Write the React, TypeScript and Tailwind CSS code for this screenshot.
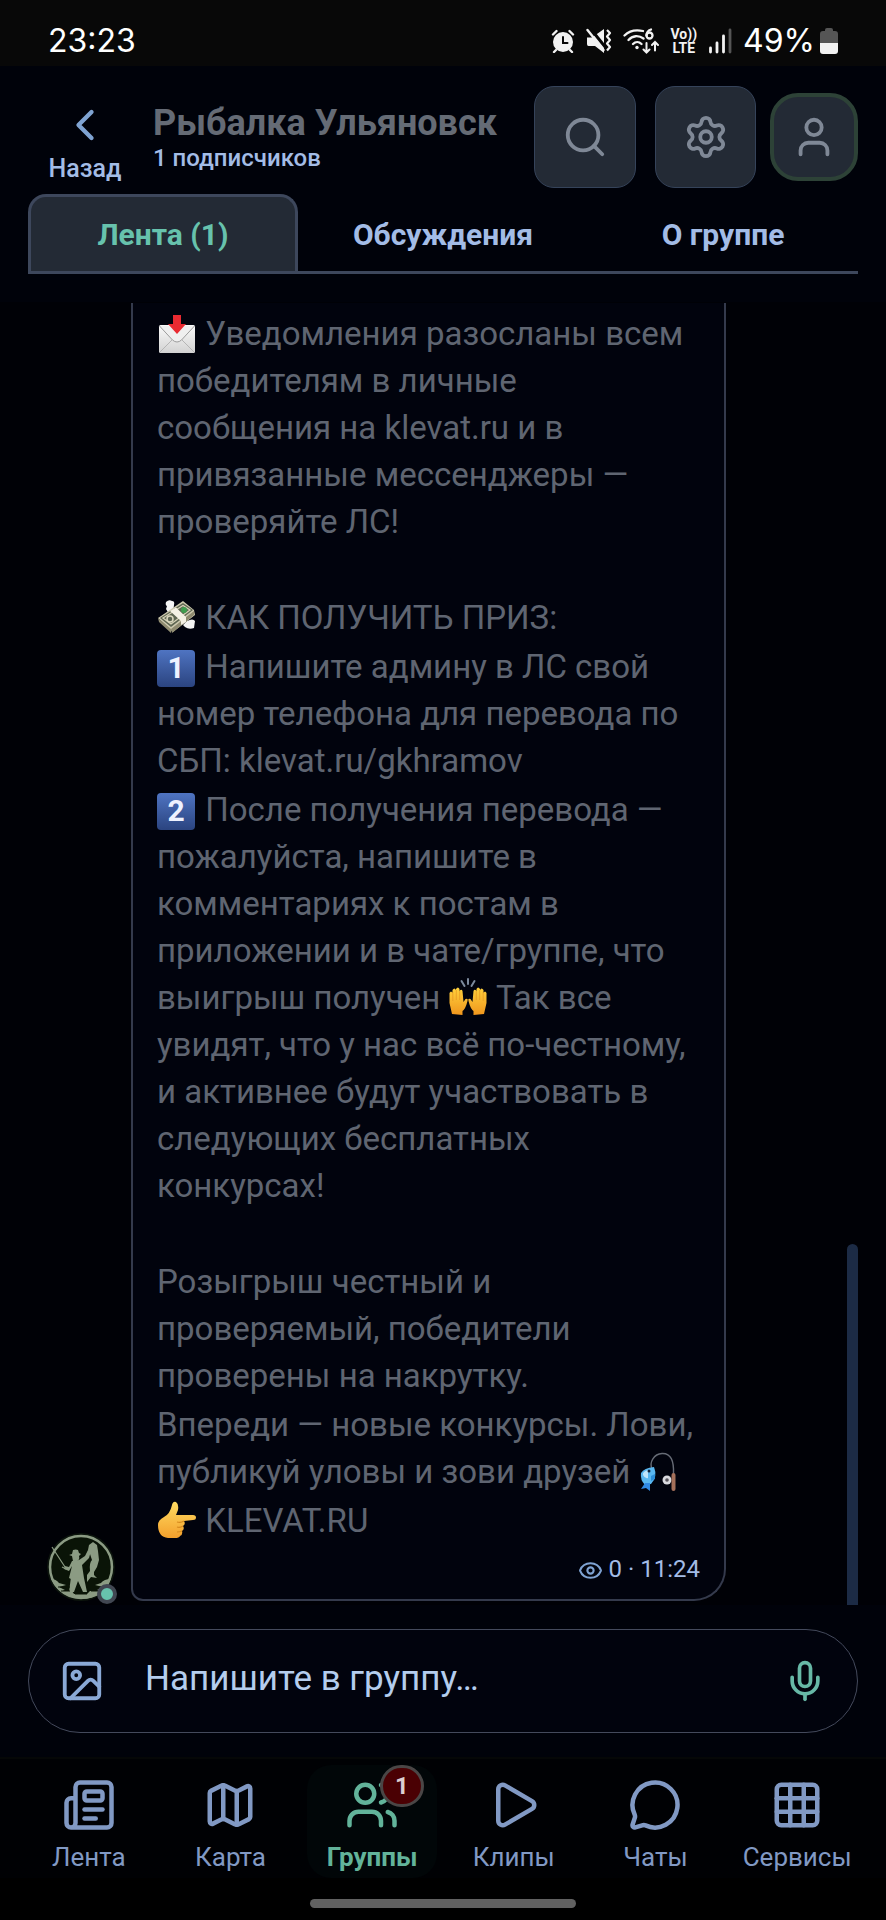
import type { ReactNode } from "react";
import {
  ChevronLeft,
  Eye,
  Grid3x3,
  Image,
  Map,
  MessageCircle,
  Mic,
  Newspaper,
  Play,
  Search,
  Settings,
  User,
  Users,
} from "lucide-react";

const StatusBar = () => (
  <div className="flex h-[66px] shrink-0 items-center justify-between bg-[#080808] pt-4 pr-12 pl-12 font-[Inter,sans-serif] text-white">
    <span className="text-[32px] leading-[36px]">23:23</span>
    <div className="flex items-center gap-[11px]">
      {/* alarm */}
      <svg viewBox="0 0 24 24" className="h-6 w-6" fill="none" stroke="#f2f2f2" strokeWidth="2.4" strokeLinecap="round">
        <circle cx="12" cy="13" r="10" fill="#f2f2f2" stroke="none" />
        <path d="M2 5.5 5.5 2M22 5.5 18.500 2M5 21l-2 2M19 21l2 2" />
        <path d="M12 8v6h4.500" stroke="#080808" strokeWidth="2" />
      </svg>
      {/* vibrate, sound off */}
      <svg viewBox="0 0 26 26" className="h-[26px] w-[26px]" fill="none">
        <path d="M1 9.500h5L18 1v24L9 18H2.500Q1 18 1 16Z" fill="#f2f2f2" />
        <path d="m4 0 16 20" stroke="#080808" strokeWidth="3" />
        <path d="m1.500 2 16 20" stroke="#f2f2f2" strokeWidth="2.400" strokeLinecap="round" />
        <path d="m21 2 3 3-3 3.500 3 3.500-3 3.500 3 3.500-3 3.500" stroke="#f2f2f2" strokeWidth="2.200" strokeLinejoin="round" />
      </svg>
      {/* wi-fi 6 */}
      <svg viewBox="0 0 36 26" className="h-[26px] w-9" fill="none" stroke="#f2f2f2" strokeWidth="2.300" strokeLinecap="round">
        <path d="M1.500 7.500C7 2 13 1.500 20 3M5.500 12c4-4.500 10-5 15-1.500M10 16c2.500-2.500 6-2.500 8.500 0" />
        <circle cx="14" cy="19.500" r="1.700" fill="#f2f2f2" stroke="none" />
        <path d="M28 1.500c-3 1-4.500 3.500-4.500 6" />
        <circle cx="26.500" cy="7.500" r="3" />
        <path d="M23.500 15v9.500m-3-3 3 3 3-3M32 22.500V14m-3 3 3-3 3 3" strokeWidth="2" />
      </svg>
      <span className="text-center font-[Roboto,sans-serif] text-[14px] leading-[14px] font-bold text-[#f2f2f2]">
        Vo))
        <br />
        LTE
      </span>
      <svg viewBox="0 0 24 26" className="h-[26px] w-6">
        <path d="M2.500 24v-4M9 24v-9M15.500 24V8" stroke="#f2f2f2" strokeWidth="2.800" strokeLinecap="round" />
        <path d="M22 24V2" stroke="#555" strokeWidth="2.800" strokeLinecap="round" />
      </svg>
      <div className="flex items-center gap-[5px]">
        <span className="text-[32px] leading-[36px]">49%</span>
        <svg viewBox="0 0 18 26" className="h-[26px] w-[18px]">
          <path d="M5 3V2q0-2 2-2h4q2 0 2 2v1h2q3 0 3 3v9H0V6q0-3 3-3Z" fill="#555" />
          <path d="M0 15h18v8q0 3-3 3H3q-3 0-3-3Z" fill="#f2f2f2" />
        </svg>
      </div>
    </div>
  </div>
);

const Header = () => (
  <header className="flex shrink-0 items-start px-7 pt-5">
    <a href="#back" className="flex w-[114px] flex-col items-center pt-[13px] text-[25px] leading-[28px] font-medium text-[#a3bce6]">
      <ChevronLeft className="mb-1 h-[52px] w-[52px] text-[#7fa3d2]" />
      Назад
    </a>
    <div className="min-w-0 flex-1 pt-4 pl-[11px]">
      <h1 className="truncate text-[36px] leading-[42px] font-bold text-[#656b75]">Рыбалка Ульяновск</h1>
      <p className="text-[24px] leading-[28px] font-medium text-[#a3bce6]">1 подписчиков</p>
    </div>
    <div className="flex items-center text-[#7f8896]">
      <button aria-label="Поиск" className="mr-[19px] flex h-[102px] w-[102px] items-center justify-center rounded-[20px] border border-[#35435a] bg-[#232a35]">
        <Search className="h-[46px] w-[46px]" />
      </button>
      <button aria-label="Настройки" className="mr-[14px] flex h-[102px] w-[101px] items-center justify-center rounded-[20px] border border-[#35435a] bg-[#232a35]">
        <Settings className="h-[46px] w-[46px]" />
      </button>
      <button aria-label="Профиль" className="flex h-[88px] w-[88px] items-center justify-center rounded-[28px] border-4 border-[#2d4237] bg-[#232a35]">
        <User className="h-[46px] w-[46px]" />
      </button>
    </div>
  </header>
);

const Tabs = () => (
  <nav className="mx-7 mt-[6px] grid h-20 shrink-0 grid-cols-3 gap-[10px] border-b-[3px] border-[#3d475c] text-[30px] font-bold text-[#a3bce6]">
    <button className="rounded-t-[18px] border-[3px] border-b-0 border-[#3d475c] bg-[#232a35] text-[#67c2ad]">Лента (1)</button>
    <button className="pt-[3px]">Обсуждения</button>
    <button className="pt-[3px]">О группе</button>
  </nav>
);

const Emoji = ({ label, children }: { label: string; children: ReactNode }) => (
  <svg viewBox="0 0 40 40" role="img" aria-label={label} className="inline-block h-10 w-10 align-[-9px]">
    {children}
  </svg>
);

const Envelope = () => (
  <Emoji label="Входящее письмо">
    <defs>
      <linearGradient id="paper" x1="0" y1="0" x2="0" y2="1">
        <stop offset="0" stopColor="#fafafa" />
        <stop offset="1" stopColor="#d2d2d2" />
      </linearGradient>
    </defs>
    <rect x="2" y="11" width="36" height="28" rx="1.500" fill="url(#paper)" />
    <path d="m3 38 12-12M37 38 25 26" stroke="#b5b5b5" strokeWidth="1" />
    <path d="m2.500 12 13 14q4.500 4 9 0l13-14" fill="#efefef" stroke="#9c9c9c" strokeWidth="1" />
    <path d="M16 1h8v9h5l-9 10-9-10h5Z" fill="#e92a31" />
  </Emoji>
);

const Money = () => (
  <Emoji label="Деньги">
    <path d="M10 8q-2-1-1-4 3-3 6-1 3 0 2 4l-1 8-4 1-3-5ZM26 27l4-4q6-3 8 0l-1 7q-5 2-9-1Z" fill="#f5f5f5" />
    <path d="M1 20 26 3l11 9 1 5-22 17Z" fill="#cdc9ae" />
    <path d="m1 20 13 11v4L2 24ZM14 31l23-18v4L15 35Z" fill="#8f8b70" />
    <path d="m3 20 23-15 10 7-22 17Z" fill="#5e6652" />
    <path d="m6 20 20-12.500 7 4.500-19 14Z" fill="none" stroke="#d6d2b7" strokeWidth="1.300" />
    <circle cx="27" cy="12" r="3" fill="#3f9d4e" />
    <circle cx="13" cy="21" r="3" fill="none" stroke="#d9d6bd" strokeWidth="1.500" />
    <path d="m13 13 6-3.500 10 9.500v5l-5 3v-4Z" fill="#f4f1e4" />
  </Emoji>
);

const Keycap = ({ digit }: { digit: string }) => (
  <span className="mr-[2px] inline-flex h-[37px] w-[38px] items-center justify-center rounded-[4px] bg-linear-to-b from-[#4f74c2] to-[#2b4480] align-baseline text-[30px] leading-none font-bold text-[#eef2ff]">
    {digit}
  </span>
);

const Hands = () => (
  <Emoji label="Руки вверх">
    <defs>
      <linearGradient id="skin" x1="0" y1="0" x2="0" y2="1">
        <stop offset="0" stopColor="#ffd23d" />
        <stop offset="1" stopColor="#f0961d" />
      </linearGradient>
    </defs>
    {["", "translate(40 0) scale(-1 1)"].map((flip) => (
      <g key={flip} transform={flip}>
        <path
          d="M4 36 1.500 25V15q1.500-3 3 0V12q2-3 3.500 0v-1q2-3 3.500 0v2q2-2.500 3 0l1 11 2-3q3-1 2 2-2 8-5 10v4Z"
          fill="url(#skin)"
        />
        <path d="M4.800 14v9M8.300 12v10M11.700 13v9" stroke="#e79a23" strokeWidth="0.800" />
      </g>
    ))}
    <path d="m13.500 3 3 5M20 1v5M26.500 3l-3 5" stroke="#7c8a9c" strokeWidth="2" strokeLinecap="round" />
  </Emoji>
);

const Fishing = () => (
  <Emoji label="Удочка">
    <path d="M13 17C10 10 15 2 23 1.500 32 1 35 9 34.500 22" fill="none" stroke="#666b75" strokeWidth="1.400" />
    <path d="M15 15Q5 16 2 21q-1 7 4 12l6-1q7-7 3-17Z" fill="#59b7f0" />
    <path d="M9 18q-6 2-5 5 2 4 5 3Z" fill="#bfe6fb" />
    <path d="m6 31-4 6 5-1 4 3 0-8Z" fill="#318ae4" />
    <path d="m12 24 4-2v5l-4 2Z" fill="#2c8ed8" />
    <circle cx="10" cy="19" r="1.500" fill="#10233c" />
    <circle cx="28" cy="28" r="4.500" fill="#d9dade" />
    <circle cx="28" cy="28" r="1.800" fill="#56545a" />
    <rect x="32.500" y="21" width="4" height="18" rx="2" fill="#a4705a" />
  </Emoji>
);

const PointRight = () => (
  <Emoji label="Указывает вправо">
    <defs>
      <linearGradient id="point" x1="0" y1="0" x2="0" y2="1">
        <stop offset="0" stopColor="#ffdc62" />
        <stop offset="1" stopColor="#f3a02c" />
      </linearGradient>
    </defs>
    <path
      d="M1 24q0-5 6-8 6-3 8-12 1-4 4-3 3 2 2 8l-2 5h17q3 0 3 2.500T36 19l-9 1q2 3-1 5 2 3-1 5 1 4-2 5-1 2-5 2h-7Q1 36 1 24Z"
      fill="url(#point)"
    />
    <path d="M20 21q4 1 7-1M20 26q3 1 6-1M20 31q3 0 5-1" fill="none" stroke="#d68a1e" strokeWidth="1.200" />
  </Emoji>
);

const Avatar = () => (
  <div className="relative h-[68px] w-[68px] shrink-0">
    <svg viewBox="0 0 68 68" className="h-full w-full" role="img" aria-label="Рыбак">
      <circle cx="34" cy="34" r="34" fill="#0c150d" />
      <circle cx="34" cy="34" r="31" fill="#0a1407" stroke="#8b9b83" strokeWidth="2.500" />
      <g fill="#8b9b83">
        {/* shore */}
        <path d="M4 46q5 0 8 4l7 2-7 2 6 3-4 1h11l2 3h13l3-3h11l-4-1 6-3-8-2 6-2q3-4 10-4-7 20-30 20Q12 64 4 46Z" />
        {/* hat and head */}
        <path d="m22 22 3-1 1-4q3-1 5 0l1 3 2 1-2 2q1 4-2 5h-4l-1-5Z" />
        {/* jacket and arms */}
        <path d="m25 28 7-1 6-4 3-6 3 1-2 7-7 7 2 13-5 2-8-1-2-1 3-12-3 5-5-2 1-3 4 1Z" />
        {/* legs */}
        <path d="m24 44 13 1 3 14h-4l-5-11-4 11h-5Z" />
        {/* catch */}
        <path d="m42 12 4-3 4 3 1 6 1 9-2 7-3 5v3l3 3-6-1-4 5v-7l3-4q-1-8 2-11l-2-6-2-4Z" />
      </g>
      <path d="m5 14 13 20M15 34l4 2" stroke="#8b9b83" strokeWidth="1.200" />
      <path d="M11 54h12M14 58h9M45 54h11M44 58h9M28 61h12" stroke="#0a1407" strokeWidth="1" />
    </svg>
    <span className="absolute -right-[2px] -bottom-[3px] h-5 w-5 rounded-full border-4 border-[#414752] bg-[#67c2ad]" />
  </div>
);

const Message = () => (
  <article className="flex items-end gap-4 pr-[160px] pl-[47px]">
    <Avatar />
    <div className="min-w-0 flex-1 rounded-br-[32px] rounded-bl-[12px] border-2 border-t-0 border-[#343a4c] bg-[#01030d] px-6 pt-[7px] pb-[16px]">
      <div className="flex flex-col gap-[49px] text-[33px] leading-[47px] whitespace-pre text-[#5f6571]">
        <p>
          <Envelope /> Уведомления разосланы всем
          <br />
          победителям в личные
          <br />
          сообщения на klevat.ru и в
          <br />
          привязанные мессенджеры —
          <br />
          проверяйте ЛС!
        </p>
        <div className="flex flex-col gap-[2px]">
          <p>
            <Money /> КАК ПОЛУЧИТЬ ПРИЗ:
          </p>
          <p>
            <Keycap digit="1" /> Напишите админу в ЛС свой
            <br />
            номер телефона для перевода по
            <br />
            СБП: klevat.ru/gkhramov
          </p>
          <p>
            <Keycap digit="2" /> После получения перевода —
            <br />
            пожалуйста, напишите в
            <br />
            комментариях к постам в
            <br />
            приложении и в чате/группе, что
            <br />
            выигрыш получен <Hands /> Так все
            <br />
            увидят, что у нас всё по-честному,
            <br />
            и активнее будут участвовать в
            <br />
            следующих бесплатных
            <br />
            конкурсах!
          </p>
        </div>
        <div className="flex flex-col gap-[2px]">
          <p>
            Розыгрыш честный и
            <br />
            проверяемый, победители
            <br />
            проверены на накрутку.
          </p>
          <p>
            Впереди — новые конкурсы. Лови,
            <br />
            публикуй уловы и зови друзей <Fishing />
          </p>
          <p>
            <PointRight /> KLEVAT.RU
          </p>
        </div>
      </div>
      <div className="mt-[11px] flex items-center justify-end gap-[6px] text-[24px] leading-[28px] text-[#a3bce6]">
        <Eye className="mt-[2px] h-[25px] w-[25px] text-[#7fa3d2]" />
        <span>0 · 11:24</span>
      </div>
    </div>
  </article>
);

const Composer = () => (
  <form className="mx-7 mt-6 flex h-[104px] shrink-0 items-center rounded-full border border-[#444a5c] bg-[#01030d] pr-[30px] pl-[30px]">
    <button type="button" aria-label="Добавить фото" className="mr-10 text-[#8aa9d6]">
      <Image className="h-[46px] w-[46px]" />
    </button>
    <input
      aria-label="Сообщение"
      placeholder="Напишите в группу…"
      className="min-w-0 flex-1 bg-transparent pb-1 text-[35px] leading-[40px] outline-none placeholder:text-[#b4cdee]"
    />
    <button type="button" aria-label="Голосовое сообщение" className="text-[#67b8a6]">
      <Mic className="h-11 w-11" />
    </button>
  </form>
);

const items = [
  { label: "Лента", icon: Newspaper },
  { label: "Карта", icon: Map },
  { label: "Группы", icon: Users, badge: 1 },
  { label: "Клипы", icon: Play },
  { label: "Чаты", icon: MessageCircle },
  { label: "Сервисы", icon: Grid3x3 },
];

const BottomNav = () => (
  <nav className="mt-6 shrink-0 border-t-2 border-[#050707] bg-[#000104] px-[18px] pt-[6px]">
    <div className="grid grid-cols-6">
      {items.map(({ label, icon: Icon, badge }) => (
        <a
          key={label}
          href="#nav"
          className={
            badge
              ? "relative mx-[6px] flex h-[113px] flex-col items-center rounded-[24px] bg-[#010608] pt-[13px] text-[26px] leading-[30px] font-bold text-[#62b39a]"
              : "flex h-[113px] flex-col items-center pt-[13px] text-[26px] leading-[30px] text-[#8199c4]"
          }
        >
          <Icon className="mb-[10px] h-[54px] w-[54px] shrink-0" />
          {label}
          {badge && (
            <span className="absolute top-0 right-[13px] flex h-[42px] w-[44px] items-center justify-center rounded-full border-[3px] border-[#4a4646] bg-[#4a0003] text-[24px] leading-none text-[#dccfd2]">
              {badge}
            </span>
          )}
        </a>
      ))}
    </div>
  </nav>
);

export default function App() {
  return (
    <div className="flex h-screen flex-col bg-[#00020a] font-[Roboto,sans-serif]">
      <StatusBar />
      <Header />
      <Tabs />
      <main className="relative mt-7 flex min-h-0 flex-1 flex-col justify-end overflow-hidden bg-[#000106] pb-1">
        <Message />
        {/* scroll thumb */}
        <div className="absolute right-7 bottom-0 h-[361px] w-[11px] rounded-t-full bg-[#1c2b45]" />
      </main>
      <Composer />
      <BottomNav />
      <div className="flex h-[42px] shrink-0 items-end justify-center bg-black pb-3">
        <div className="h-[9px] w-[30%] rounded-full bg-[#616161]" />
      </div>
    </div>
  );
}
